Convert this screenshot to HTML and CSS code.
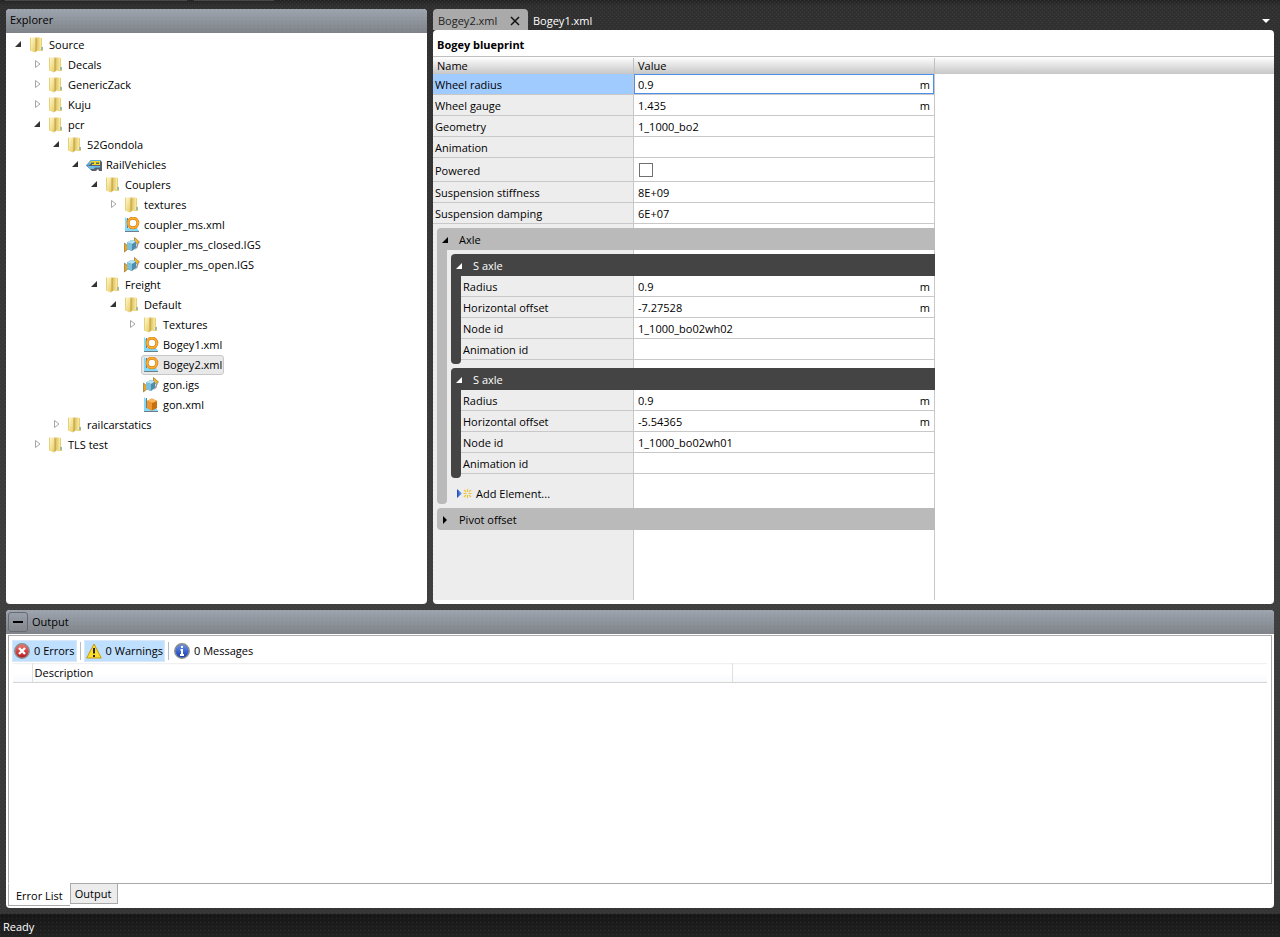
FILE: index.html
```html
<!DOCTYPE html>
<html lang="en">
<head>
    <meta charset="UTF-8">
    <meta name="viewport" content="width=device-width, initial-scale=1.0">
    <title>Blueprint Editor</title>
    <link rel="stylesheet" href="styles.css">
</head>
<body>

    <svg class="defs" width="0" height="0" aria-hidden="true">
        <defs>
            <linearGradient id="gold" x1="0" y1="0" x2="1" y2="1">
                <stop offset="0" stop-color="#fffbd6"/>
                <stop offset="1" stop-color="#e6c95e"/>
            </linearGradient>
            <linearGradient id="goldDark" x1="0" y1="0" x2="1" y2="0">
                <stop offset="0" stop-color="#d3b04a"/>
                <stop offset="1" stop-color="#f8eba6"/>
            </linearGradient>
            <linearGradient id="red" x1="0" y1="0" x2="0" y2="1">
                <stop offset="0" stop-color="#ef7a72"/>
                <stop offset="1" stop-color="#b3141c"/>
            </linearGradient>
            <linearGradient id="blue" x1="0" y1="0" x2="0" y2="1">
                <stop offset="0" stop-color="#6f96ee"/>
                <stop offset="1" stop-color="#1238b0"/>
            </linearGradient>
            <linearGradient id="play" x1="0" y1="0" x2="1" y2="0">
                <stop offset="0" stop-color="#1748b8"/>
                <stop offset="1" stop-color="#7fb0f5"/>
            </linearGradient>
        </defs>
        <symbol id="open" viewBox="0 0 8 8"><path d="M7 1v6H1z" fill="currentColor"/></symbol>
        <symbol id="closed" viewBox="0 0 8 8"><path d="M2.500 0.500v7L7 4z" fill="#fff" stroke="#a6a6a6"/></symbol>
        <symbol id="folder" viewBox="0 0 16 16">
            <path d="M10 1h3v8.500l1 1V14h-4z" fill="#ecd06e"/>
            <path d="M12.500 10h1v3h-1z" fill="#4fa3d8"/>
            <path d="M6 0.500h6V13l-5 1z" fill="url(#goldDark)"/>
            <path d="M1 0.500h5l1 1V14.500L6 15.500 1 13.500z" fill="url(#gold)"/>
            <path d="M7 1.500V14.500" stroke="#c29d3a" fill="none"/>
            <path d="M1.500 0.500v13" stroke="#e8d278" fill="none"/>
        </symbol>
        <symbol id="train" viewBox="0 0 16 16">
            <path d="M0 8.500L5 3h9l2 2v9h-3l-1-2-2 2H6z" fill="#59626b"/>
            <path d="M0 8.500L5 3h9l1 1H7L3 8.500z" fill="#55afe5"/>
            <path d="M5 4h9v4H6V6.500H3.500z" fill="#f5d727"/>
            <path d="M5 5.500h3V7H5zM10 5.500h3V7h-3z" fill="#43637b"/>
            <path d="M1 9h13v1.500H9L8 12H4z" fill="#6dbcec"/>
        </symbol>
        <symbol id="ring" viewBox="0 0 16 16">
            <path d="M1 0l3 3v8h9l2 3H1z" fill="#83d9f8"/>
            <path d="M1 14.500h14M3.500 1v10" stroke="#6f7d88" fill="none"/>
            <circle cx="9" cy="6" r="4.800" fill="#fff" stroke="#d9820f" stroke-width="3"/>
            <circle cx="9" cy="6" r="4.800" fill="none" stroke="#fbae35" stroke-width="1.800"/>
        </symbol>
        <symbol id="geometry" viewBox="0 0 16 16">
            <path d="M0.500 6l5 4.500-5 4.500z" fill="#eda51d" stroke="#805f24" stroke-width="0.600"/>
            <path d="M10.500 0.500l5 4.500-5 3z" fill="#f7b825" stroke="#805f24" stroke-width="0.600"/>
            <path d="M3 5.500L7.500 3 12 4.500V11l-4 3-5-2z" fill="#4e8dae"/>
            <path d="M3 5.500L7.500 3 12 4.500 8 7z" fill="#b5e3f4"/>
            <path d="M3 5.500L8 7v7l-5-2z" fill="#7dc0db"/>
            <path d="M13 7l2-1.500-1.500 5L11 13z" fill="#999"/>
        </symbol>
        <symbol id="box" viewBox="0 0 16 16">
            <path d="M1 0l3 3v8h9l2 3H1z" fill="#83d9f8"/>
            <path d="M1 14.500h14M3.500 1v10" stroke="#6f7d88" fill="none"/>
            <path d="M4 4l5-2.500L14 4v7l-5 2.500L4 11z" fill="#c96f12"/>
            <path d="M4 4l5-2.500L14 4 9 6z" fill="#fbb65a"/>
            <path d="M4 4l5 2v7.500L4 11z" fill="#ef962d"/>
        </symbol>
        <symbol id="error" viewBox="0 0 16 16">
            <circle cx="8" cy="8" r="7.200" fill="url(#red)" stroke="#8b8b8b" stroke-width="1.500"/>
            <path d="M5 5l6 6M11 5l-6 6" stroke="#fff" stroke-width="2.400"/>
        </symbol>
        <symbol id="warning" viewBox="0 0 16 16">
            <path d="M8 1l7.300 14H0.700z" fill="#fbdc28" stroke="#c49a12" stroke-linejoin="round"/>
            <path d="M8 5v5.500M8 12v2" stroke="#222" stroke-width="2"/>
        </symbol>
        <symbol id="info" viewBox="0 0 16 16">
            <circle cx="8" cy="8" r="7.200" fill="url(#blue)" stroke="#8b8b8b" stroke-width="1.500"/>
            <path d="M8 3v2M6.500 7H8v5M6 12h4" stroke="#fff" stroke-width="2" fill="none"/>
        </symbol>
    </svg>

    <div class="toolbar-edge"><span class="wide"></span><span></span></div>

    <main class="workspace">
        <section class="panel explorer">
            <h2 class="panel-title">Explorer</h2>
            <ul class="tree">
                <li>
                    <div class="row"><button class="toggle" aria-label="Collapse"><svg><use href="#open"/></svg></button><span class="item"><svg><use href="#folder"/></svg>Source</span></div>
                    <ul>
                        <li><div class="row"><button class="toggle" aria-label="Expand"><svg><use href="#closed"/></svg></button><span class="item"><svg><use href="#folder"/></svg>Decals</span></div></li>
                        <li><div class="row"><button class="toggle" aria-label="Expand"><svg><use href="#closed"/></svg></button><span class="item"><svg><use href="#folder"/></svg>GenericZack</span></div></li>
                        <li><div class="row"><button class="toggle" aria-label="Expand"><svg><use href="#closed"/></svg></button><span class="item"><svg><use href="#folder"/></svg>Kuju</span></div></li>
                        <li>
                            <div class="row"><button class="toggle" aria-label="Collapse"><svg><use href="#open"/></svg></button><span class="item"><svg><use href="#folder"/></svg>pcr</span></div>
                            <ul>
                                <li>
                                    <div class="row"><button class="toggle" aria-label="Collapse"><svg><use href="#open"/></svg></button><span class="item"><svg><use href="#folder"/></svg>52Gondola</span></div>
                                    <ul>
                                        <li>
                                            <div class="row"><button class="toggle" aria-label="Collapse"><svg><use href="#open"/></svg></button><span class="item"><svg><use href="#train"/></svg>RailVehicles</span></div>
                                            <ul>
                                                <li>
                                                    <div class="row"><button class="toggle" aria-label="Collapse"><svg><use href="#open"/></svg></button><span class="item"><svg><use href="#folder"/></svg>Couplers</span></div>
                                                    <ul>
                                                        <li><div class="row"><button class="toggle" aria-label="Expand"><svg><use href="#closed"/></svg></button><span class="item"><svg><use href="#folder"/></svg>textures</span></div></li>
                                                        <li><div class="row leaf"><span class="item"><svg><use href="#ring"/></svg>coupler_ms.xml</span></div></li>
                                                        <li><div class="row leaf"><span class="item"><svg><use href="#geometry"/></svg>coupler_ms_closed.IGS</span></div></li>
                                                        <li><div class="row leaf"><span class="item"><svg><use href="#geometry"/></svg>coupler_ms_open.IGS</span></div></li>
                                                    </ul>
                                                </li>
                                                <li>
                                                    <div class="row"><button class="toggle" aria-label="Collapse"><svg><use href="#open"/></svg></button><span class="item"><svg><use href="#folder"/></svg>Freight</span></div>
                                                    <ul>
                                                        <li>
                                                            <div class="row"><button class="toggle" aria-label="Collapse"><svg><use href="#open"/></svg></button><span class="item"><svg><use href="#folder"/></svg>Default</span></div>
                                                            <ul>
                                                                <li><div class="row"><button class="toggle" aria-label="Expand"><svg><use href="#closed"/></svg></button><span class="item"><svg><use href="#folder"/></svg>Textures</span></div></li>
                                                                <li><div class="row leaf"><span class="item"><svg><use href="#ring"/></svg>Bogey1.xml</span></div></li>
                                                                <li><div class="row leaf"><span class="item selected"><svg><use href="#ring"/></svg>Bogey2.xml</span></div></li>
                                                                <li><div class="row leaf"><span class="item"><svg><use href="#geometry"/></svg>gon.igs</span></div></li>
                                                                <li><div class="row leaf"><span class="item"><svg><use href="#box"/></svg>gon.xml</span></div></li>
                                                            </ul>
                                                        </li>
                                                    </ul>
                                                </li>
                                            </ul>
                                        </li>
                                    </ul>
                                </li>
                                <li><div class="row"><button class="toggle" aria-label="Expand"><svg><use href="#closed"/></svg></button><span class="item"><svg><use href="#folder"/></svg>railcarstatics</span></div></li>
                            </ul>
                        </li>
                        <li><div class="row"><button class="toggle" aria-label="Expand"><svg><use href="#closed"/></svg></button><span class="item"><svg><use href="#folder"/></svg>TLS test</span></div></li>
                    </ul>
                </li>
            </ul>
        </section>

        <section class="editor">
            <div class="tabs">
                <div class="tab active">
                    <button class="tab-name">Bogey2.xml</button>
                    <button class="tab-close" aria-label="Close"><svg width="10" height="10" viewBox="0 0 10 10"><path d="M1 1l8 8M9 1l-8 8" stroke="#111" stroke-width="1.500"/></svg></button>
                </div>
                <div class="tab"><button class="tab-name">Bogey1.xml</button></div>
                <button class="tab-list" aria-label="Open documents"><svg width="8" height="4" viewBox="0 0 8 4"><path d="M0 0h8L4 4z" fill="#fff"/></svg></button>
            </div>

            <div class="document">
                <h1>Bogey blueprint</h1>
                <div class="columns"><span>Name</span><span>Value</span></div>
                <form class="properties">
                    <div class="prop current"><label for="wheelRadius">Wheel radius</label><div class="value"><input type="text" id="wheelRadius" value="0.9"><span>m</span></div></div>
                    <div class="prop"><label for="wheelGauge">Wheel gauge</label><div class="value"><input type="text" id="wheelGauge" value="1.435"><span>m</span></div></div>
                    <div class="prop"><label for="geometryId">Geometry</label><div class="value"><input type="text" id="geometryId" value="1_1000_bo2"></div></div>
                    <div class="prop"><label for="animation">Animation</label><div class="value"><input type="text" id="animation"></div></div>
                    <div class="prop check"><label for="powered">Powered</label><div class="value"><input type="checkbox" id="powered"></div></div>
                    <div class="prop"><label for="stiffness">Suspension stiffness</label><div class="value"><input type="text" id="stiffness" value="8E+09"></div></div>
                    <div class="prop"><label for="damping">Suspension damping</label><div class="value"><input type="text" id="damping" value="6E+07"></div></div>

                    <div class="group">
                        <button type="button" class="group-title"><svg><use href="#open"/></svg>Axle</button>
                        <div class="group-body">
                            <span class="rail"></span>
                            <div class="group-items">
                                <div class="group dark">
                                    <button type="button" class="group-title"><svg><use href="#open"/></svg>S axle</button>
                                    <div class="group-body">
                                        <span class="rail"></span>
                                        <div class="group-items">
                                            <div class="prop"><label for="radius1">Radius</label><div class="value"><input type="text" id="radius1" value="0.9"><span>m</span></div></div>
                                            <div class="prop"><label for="offset1">Horizontal offset</label><div class="value"><input type="text" id="offset1" value="-7.27528"><span>m</span></div></div>
                                            <div class="prop"><label for="node1">Node id</label><div class="value"><input type="text" id="node1" value="1_1000_bo02wh02"></div></div>
                                            <div class="prop"><label for="anim1">Animation id</label><div class="value"><input type="text" id="anim1"></div></div>
                                        </div>
                                    </div>
                                </div>
                                <div class="group dark">
                                    <button type="button" class="group-title"><svg><use href="#open"/></svg>S axle</button>
                                    <div class="group-body">
                                        <span class="rail"></span>
                                        <div class="group-items">
                                            <div class="prop"><label for="radius2">Radius</label><div class="value"><input type="text" id="radius2" value="0.9"><span>m</span></div></div>
                                            <div class="prop"><label for="offset2">Horizontal offset</label><div class="value"><input type="text" id="offset2" value="-5.54365"><span>m</span></div></div>
                                            <div class="prop"><label for="node2">Node id</label><div class="value"><input type="text" id="node2" value="1_1000_bo02wh01"></div></div>
                                            <div class="prop"><label for="anim2">Animation id</label><div class="value"><input type="text" id="anim2"></div></div>
                                        </div>
                                    </div>
                                </div>
                                <button type="button" class="add">
                                    <svg width="15" height="10" viewBox="0 0 15 10">
                                        <path d="M0 0v9l5-4.500z" fill="url(#play)"/>
                                        <path d="M7 1l2 2M10.500 0v3M14 1l-2 2M6.500 4.500h3M11.500 4.500h3M7 8l2-2M10.500 6v3M14 8l-2-2" stroke="#ecc63c" stroke-width="1.200"/>
                                    </svg>Add Element...
                                </button>
                            </div>
                        </div>
                    </div>

                    <div class="group collapsed">
                        <button type="button" class="group-title"><svg viewBox="0 0 8 8"><path d="M2 0v8l4-4z"/></svg>Pivot offset</button>
                    </div>
                </form>
            </div>
        </section>
    </main>

    <section class="panel output">
        <h2 class="panel-title"><button class="minimize" aria-label="Minimize"></button>Output</h2>
        <div class="output-body">
            <div class="error-list">
                <div class="filters">
                    <button class="filter on"><svg><use href="#error"/></svg>0 Errors</button>
                    <span class="separator"></span>
                    <button class="filter on"><svg><use href="#warning"/></svg>0 Warnings</button>
                    <span class="separator"></span>
                    <button class="filter"><svg><use href="#info"/></svg>0 Messages</button>
                </div>
                <table>
                    <thead>
                        <tr><th class="icon-col"></th><th class="description">Description</th><th></th></tr>
                    </thead>
                </table>
            </div>
            <div class="bottom-tabs">
                <button class="active">Error List</button>
                <button>Output</button>
            </div>
        </div>
    </section>

    <footer class="status">Ready</footer>

</body>
</html>
```

FILE: styles.css
```css
* {
    box-sizing: border-box;
}
body {
    margin: 0;
    min-height: 100vh;
    display: flex;
    flex-direction: column;
    font-family: "Open Sans", "Noto Sans", sans-serif;
    font-size: 11px;
    line-height: 16px;
    color: #000;
    background-color: #383838;
    background-image:
        conic-gradient(at 1px 1px, transparent 75%, rgba(255, 255, 255, 0.05) 0),
        conic-gradient(at 1px 1px, transparent 75%, rgba(255, 255, 255, 0.05) 0),
        linear-gradient(#242424, #303030 6px, #3e3e3e 65%, #343434);
    background-size: 4px 4px, 4px 4px, 100% 100%;
    background-position: 0 0, 2px 2px, 0 0;
}
.defs {
    position: absolute;
}
button, input {
    font: inherit;
    color: inherit;
    margin: 0;
    padding: 0;
    border: none;
    background: none;
}
h1, h2 {
    margin: 0;
    font-size: 11px;
}
ul {
    list-style: none;
    margin: 0;
    padding: 0;
}

/* top area */
.toolbar-edge {
    display: flex;
    gap: 7px;
    height: 2px;
    padding: 0 5px;
}
.toolbar-edge span {
    width: 80px;
    height: 1px;
    background: #484848;
}
.toolbar-edge .wide {
    width: 182px;
}
.workspace {
    flex: 1;
    display: grid;
    grid-template-columns: 421px 1fr;
    gap: 6px;
    padding: 7px 6px 6px;
}
.panel {
    background: #fff;
    border-radius: 4px;
    overflow: hidden;
}
.panel-title {
    height: 24px;
    display: flex;
    align-items: center;
    padding: 0 4px 2px;
    font-weight: normal;
    background:
        conic-gradient(at 1px 1px, transparent 75%, rgba(0, 0, 0, 0.06) 0) 0 0 / 4px 4px,
        linear-gradient(#9ea5af, #7f8389);
}

/* explorer tree */
.tree {
    padding: 2px 8px;
}
.tree ul {
    padding-left: 19px;
}
.row {
    display: flex;
    align-items: center;
    height: 20px;
}
.toggle {
    width: 10px;
    height: 10px;
    margin-right: 3px;
    display: flex;
    color: #333;
}
.toggle svg {
    width: 8px;
    height: 8px;
}
.leaf {
    padding-left: 13px;
}
.item {
    display: flex;
    align-items: center;
    gap: 4px;
    height: 20px;
    padding: 0 1px;
    border: 1px solid transparent;
    border-radius: 3px;
    white-space: nowrap;
}
.item svg, .filter svg {
    width: 16px;
    height: 16px;
}
.item.selected {
    background: #e8e8e8;
    border-color: #c8c8c8;
}

/* editor */
.editor {
    display: flex;
    flex-direction: column;
}
.tabs {
    display: flex;
    height: 21px;
}
.tab {
    display: flex;
    align-items: center;
    gap: 12px;
    padding: 2px 5px 0;
    color: #fff;
}
.tab.active {
    width: 95px;
    justify-content: space-between;
    padding-right: 8px;
    background: #aaa;
    border-radius: 4px 4px 0 0;
    color: #222;
}
.tab-close {
    display: flex;
}
.tab-list {
    display: flex;
    align-items: center;
    margin-left: auto;
    padding: 2px 4px 0;
}
.document {
    flex: 1;
    display: flex;
    flex-direction: column;
    padding-bottom: 4px;
    background: #fff;
    border-radius: 4px;
}
.document h1 {
    height: 27px;
    padding: 7px 4px 0;
    border-bottom: 1px solid #bfbfbf;
}
.columns {
    display: flex;
    height: 17px;
    padding-top: 1px;
    background: linear-gradient(#fff, #c6c6c6);
}
.columns span {
    width: 201px;
    padding-left: 4px;
    border-right: 1px solid #c0c0c0;
}
.columns span + span {
    width: 301px;
}
.properties {
    flex: 1;
    width: 502px;
    background: linear-gradient(to right, #ededed 200px, #c8c8c8 200px, #c8c8c8 201px, #fff 201px, #fff 501px, #c8c8c8 501px);
}
.prop {
    display: grid;
    grid-template-columns: 1fr 301px;
    height: 21px;
    border-bottom: 1px solid #c8c8c8;
}
.prop label {
    display: flex;
    align-items: center;
    padding: 2px 0 0 2px;
}
.value {
    display: flex;
    align-items: center;
    margin-right: 1px;
    padding: 2px 4px 0;
}
.value input[type="text"] {
    flex: 1;
    min-width: 0;
}
.value input:focus {
    outline: none;
}
.prop.current label {
    margin-right: 1px;
    background: #a0cbff;
}
.prop.current .value {
    padding: 2px 3px 0;
    border: 1px solid #4a90e8;
}
.prop.check {
    height: 24px;
}
.prop.check .value {
    padding-top: 0;
}
.value input[type="checkbox"] {
    appearance: none;
    width: 14px;
    height: 14px;
    margin-left: 1px;
    border: 1px solid #707070;
    background: #fff;
}
.group {
    margin: 4px 0 0 4px;
}
.group-title {
    display: flex;
    align-items: center;
    gap: 10px;
    width: 100%;
    height: 22px;
    padding: 2px 4px 0;
    background: #bababa;
    border-radius: 4px 0 0 0;
    color: #000;
}
.group-title svg {
    width: 8px;
    height: 8px;
}
.collapsed .group-title {
    border-radius: 4px 0 0 4px;
}
.group-body {
    display: grid;
    grid-template-columns: 10px 1fr;
}
.rail {
    background: #bababa;
    border-radius: 0 0 4px 4px;
}
.dark .group-items {
    padding-bottom: 4px;
}
.dark .group-title {
    background: #444;
    color: #fff;
}
.dark .rail {
    background: #444;
}
.add {
    display: flex;
    align-items: center;
    gap: 4px;
    height: 26px;
    padding: 6px 0 0 10px;
}

/* output */
.output {
    height: 298px;
    margin: 0 6px;
    display: flex;
    flex-direction: column;
}
.output .panel-title {
    gap: 4px;
    padding: 0 2px;
}
.minimize {
    display: flex;
    align-items: center;
    justify-content: center;
    width: 20px;
    height: 20px;
    border: 1px solid #666a70;
    border-radius: 3px;
}
.minimize::before {
    content: "";
    width: 10px;
    height: 2px;
    background: #000;
}
.output-body {
    flex: 1;
    display: flex;
    flex-direction: column;
    padding: 1px 2px 2px;
}
.error-list {
    flex: 1;
    padding: 4px;
    border: 1px solid #aaa;
}
.filters {
    display: flex;
    align-items: center;
    gap: 3px;
    height: 22px;
    margin: 0 0 1px -1px;
}
.filter {
    display: flex;
    align-items: center;
    gap: 4px;
    height: 22px;
    padding: 0 1px;
    border: 1px solid transparent;
}
.filter.on {
    background: #bfdfff;
    border-color: #d8e8f8;
}
.separator {
    width: 1px;
    height: 18px;
    background: #b8bcc2;
}
table {
    width: 100%;
    table-layout: fixed;
    border-collapse: collapse;
}
th {
    height: 19px;
    padding: 0 2px;
    text-align: left;
    font-weight: normal;
    border-top: 1px solid #f0f0f0;
    border-bottom: 1px solid #d5d5d5;
    border-right: 1px solid #e0e0e0;
    background: linear-gradient(#fff 50%, #f6f8fb);
}
th:last-child {
    border-right: none;
}
.icon-col {
    width: 19px;
}
.description {
    width: 700px;
}
.bottom-tabs {
    display: flex;
    align-items: flex-start;
    margin-top: -1px;
}
.bottom-tabs button {
    height: 21px;
    padding: 1px 6px 0 4px;
    border: 1px solid #aaa;
    background: #ececec;
}
.bottom-tabs .active {
    height: 23px;
    padding: 2px 7px 0;
    border-top-color: #fff;
    border-right: none;
    background: #fff;
}

.status {
    height: 23px;
    margin-top: 6px;
    padding: 5px 3px 0;
    color: #fff;
    background:
        conic-gradient(at 1px 1px, transparent 75%, rgba(255, 255, 255, 0.08) 0) 0 0 / 4px 4px,
        linear-gradient(#161616, #222);
}
```
